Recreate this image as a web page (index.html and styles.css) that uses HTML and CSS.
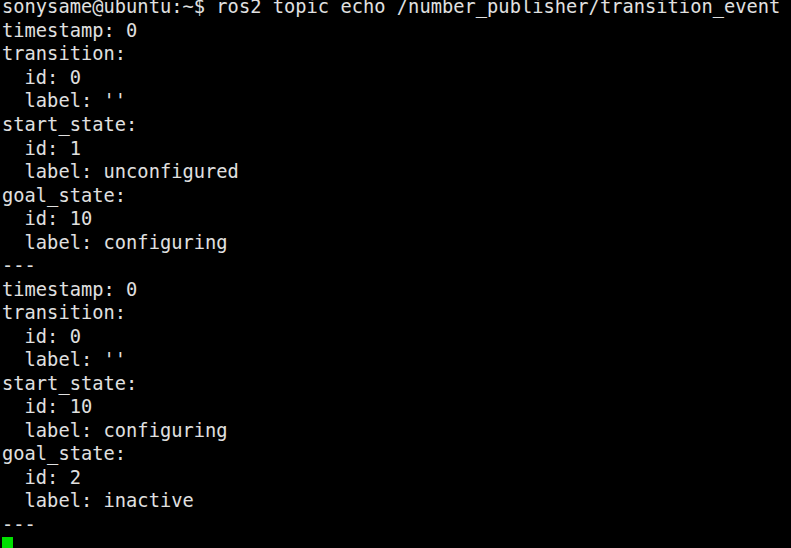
FILE: index.html
```html
<!DOCTYPE html>
<html>
<head>
<meta charset="utf-8">
<link rel="stylesheet" href="styles.css">
</head>
<body>
<pre class="term">sonysame@ubuntu:~$ ros2 topic echo /number_publisher/transition_event
timestamp: 0
transition:
  id: 0
  label: ''
start_state:
  id: 1
  label: unconfigured
goal_state:
  id: 10
  label: configuring
---
timestamp: 0
transition:
  id: 0
  label: ''
start_state:
  id: 10
  label: configuring
goal_state:
  id: 2
  label: inactive
---
<span class="cursor"></span></pre>
</body>
</html>
```
FILE: styles.css
```css
html, body {
  margin: 0;
  padding: 0;
  background: #000;
  overflow: hidden;
}
.term {
  margin: -4.6px 0 0 0;
  padding: 0 0 0 2px;
  font-family: "DejaVu Sans Mono", monospace;
  font-size: 18.7px;
  letter-spacing: 0.03px;
  line-height: 23.52px;
  color: #e0e0e0;
  white-space: pre;
}
.cursor {
  display: block;
  width: 11px;
  height: 11px;
  margin-top: 1px;
  background: #00e000;
}
```
